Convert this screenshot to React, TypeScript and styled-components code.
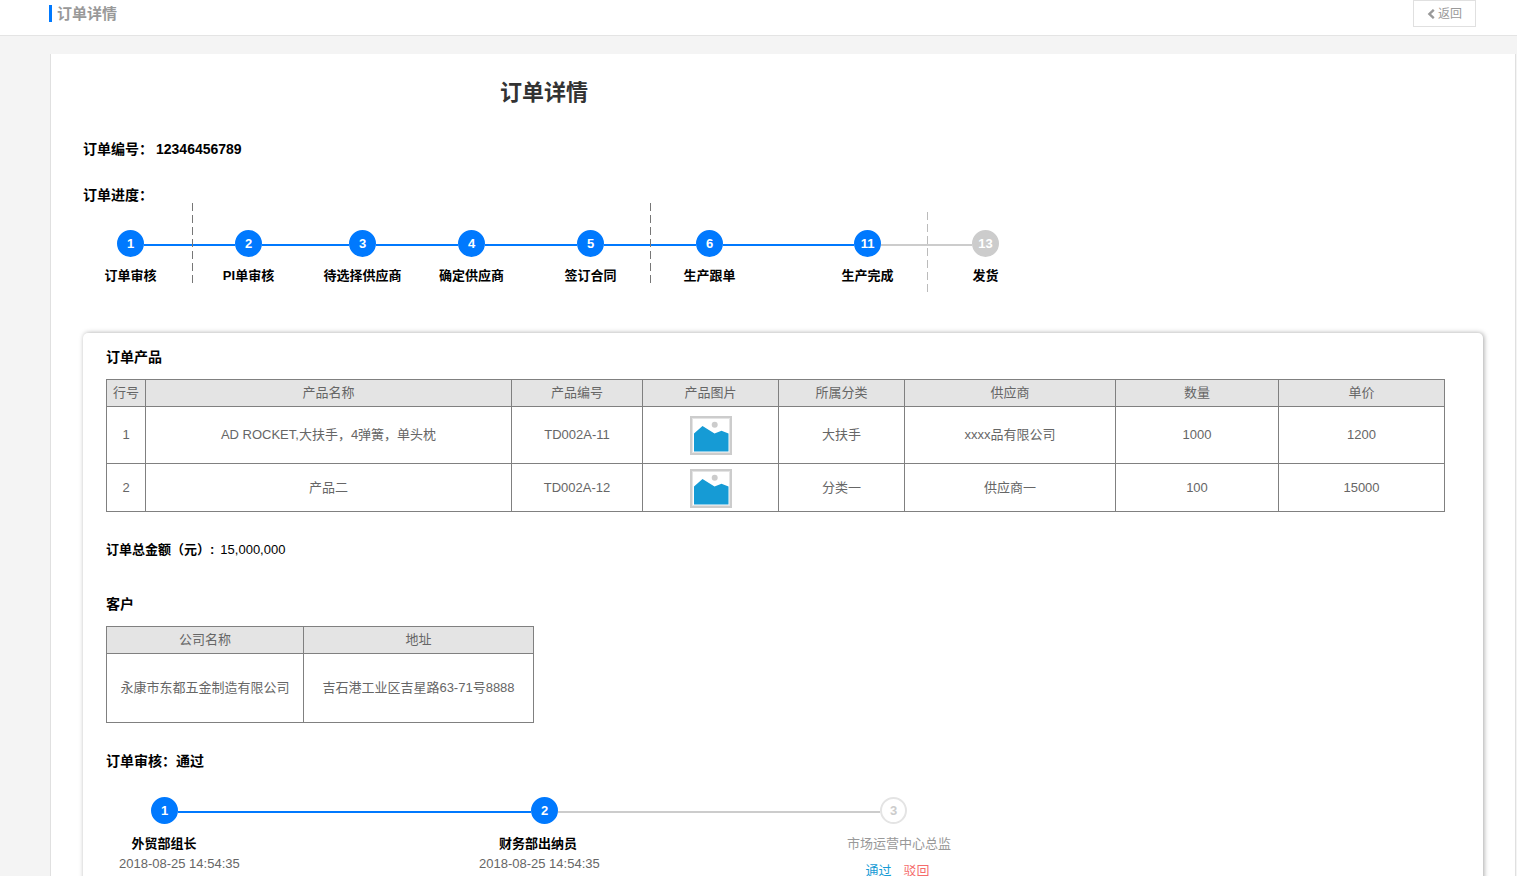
import React from "react";
import styled, { createGlobalStyle } from "styled-components";

const blue = "#0079fe";

const GlobalStyle = createGlobalStyle`
  *, *::before, *::after { box-sizing: border-box; }
  body {
    margin: 0;
    background: #f4f4f4;
    color: #666;
    font: 13px/20px "Liberation Sans", "Noto Sans CJK SC", sans-serif;
  }
  h1, h2, p { margin: 0; }
`;

const Page = styled.div`
  height: 100vh;
  overflow: hidden;
`;

const TopBar = styled.header`
  display: flex;
  align-items: flex-start;
  justify-content: space-between;
  height: 36px;
  padding: 0 41px 0 49px;
  background: #fff;
  border-bottom: 1px solid #e4e4e4;
`;

const Crumb = styled.div`
  margin-top: 5px;
  padding-left: 5px;
  border-left: 3px solid ${blue};
  color: #999;
  font-size: 15px;
  font-weight: 700;
  line-height: 17px;
`;

const BackButton = styled.button`
  display: flex;
  align-items: center;
  justify-content: center;
  gap: 3px;
  width: 63px;
  height: 27px;
  padding: 0;
  border: 1px solid #e0e0e0;
  background: #fff;
  color: #999;
  font: 12px/16px "Liberation Sans", "Noto Sans CJK SC", sans-serif;
`;

const Sheet = styled.main`
  margin: 18px 1px 0 50px;
  padding: 24px 32px 40px;
  background: #fff;
  border: solid #e0e0e0;
  border-width: 0 1px;
`;

const Overview = styled.section`
  max-width: 922px;
  height: 255px;
`;

const Title = styled.h1`
  color: #333;
  font-size: 22px;
  line-height: 30px;
  text-align: center;
`;

const Heading = styled.h2<{ $top?: number }>`
  display: flex;
  align-items: center;
  gap: 3px;
  margin-top: ${(p) => p.$top ?? 0}px;
  color: #000;
  font-size: 14px;
  font-weight: 700;
  line-height: 20px;
`;

const AmountLabel = styled.span`
  font-size: 13px;
`;

const Amount = styled.span`
  margin-left: 3px;
  font-size: 13px;
  font-weight: 400;
`;

const Track = styled.div<{ $top: number; $left: number }>`
  display: flex;
  margin: ${(p) => p.$top}px 0 0 ${(p) => p.$left}px;
`;

const Step = styled.div`
  display: flex;
  flex: none;
  flex-direction: column;
  align-items: center;
  gap: 9px;
  width: 27px;
`;

type NodeKind = "done" | "idle" | "hollow";

const Dot = styled.span<{ $kind: NodeKind }>`
  flex: none;
  width: 27px;
  height: 27px;
  border: 2px solid
    ${(p) => ({ done: blue, idle: "#ccc", hollow: "#e4e4e4" })[p.$kind]};
  border-radius: 50%;
  background: ${(p) => ({ done: blue, idle: "#ccc", hollow: "#fff" })[p.$kind]};
  color: ${(p) => (p.$kind === "hollow" ? "#ccc" : "#fff")};
  font-size: 13px;
  font-weight: 700;
  line-height: 23px;
  text-align: center;
`;

const StepLabel = styled.span`
  color: #000;
  font-weight: 700;
  white-space: nowrap;
`;

const Connector = styled.div<{ $width: number; $muted?: boolean }>`
  display: grid;
  flex: none;
  grid-template: 28px / 100%;
  align-items: center;
  width: ${(p) => p.$width}px;
  height: 28px;

  &::before {
    grid-area: 1 / 1;
    height: 2px;
    margin-top: 2px;
    background: ${(p) => (p.$muted ? "#ccc" : blue)};
    content: "";
  }
`;

const Divider = styled.i<{ $at: number; $muted?: boolean }>`
  grid-area: 1 / 1;
  width: 1px;
  height: 84px;
  margin: ${(p) => (p.$muted ? 20 : 2)}px 0 0 ${(p) => p.$at}px;
  background: repeating-linear-gradient(
    ${(p) => (p.$muted ? "#bbb" : "#777")} 0 8px,
    transparent 8px 12px
  );
`;

const Panel = styled.section`
  padding: 14px 38px 40px 23px;
  border-radius: 5px;
  background: #fff;
  box-shadow: 1px 0 5px rgba(0, 0, 0, 0.35);
`;

const Table = styled.table<{ $width?: string; $top: number }>`
  width: ${(p) => p.$width ?? "100%"};
  margin-top: ${(p) => p.$top}px;
  border-collapse: collapse;
  table-layout: fixed;
  text-align: center;

  th,
  td {
    padding: 0;
    border: 1px solid #808080;
    font-weight: 400;
  }

  th {
    height: 27px;
    background: #e4e4e4;
  }
`;

const Row = styled.tr<{ $height: number }>`
  height: ${(p) => p.$height}px;
`;

const Picture = styled.svg`
  display: block;
  margin: 1px auto 0;
`;

const Captions = styled.div`
  display: flex;
  margin: 9px 0 0 13px;
`;

const Caption = styled.div<{ $width: number }>`
  flex: none;
  width: ${(p) => p.$width}px;
  white-space: nowrap;
`;

const Person = styled.p<{ $width: number; $muted?: boolean }>`
  width: ${(p) => p.$width}px;
  color: ${(p) => (p.$muted ? "#999" : "#000")};
  font-weight: ${(p) => (p.$muted ? 400 : 700)};
  text-align: center;
`;

const Actions = styled.p`
  display: flex;
  justify-content: center;
  gap: 12px;
  width: 101px;
  margin-top: 7px;
`;

const Action = styled.a<{ $danger?: boolean }>`
  color: ${(p) => (p.$danger ? "#f56c6c" : "#169bd5")};
  text-decoration: none;
`;

type StepItem = {
  no: string;
  label: string;
  kind?: NodeKind;
  gap?: number;
  divider?: number;
  muted?: boolean;
};

const steps: StepItem[] = [
  { no: "1", label: "订单审核", gap: 91, divider: 48 },
  { no: "2", label: "PI单审核", gap: 87 },
  { no: "3", label: "待选择供应商", gap: 82 },
  { no: "4", label: "确定供应商", gap: 92 },
  { no: "5", label: "签订合同", gap: 92, divider: 46 },
  { no: "6", label: "生产跟单", gap: 131 },
  { no: "11", label: "生产完成", gap: 91, divider: 46, muted: true },
  { no: "13", label: "发货", kind: "idle" },
];

const productColumns: [string, number][] = [
  ["行号", 39],
  ["产品名称", 366],
  ["产品编号", 131],
  ["产品图片", 136],
  ["所属分类", 126],
  ["供应商", 211],
  ["数量", 163],
  ["单价", 166],
];

const products = [
  { name: "AD ROCKET,大扶手，4弹簧，单头枕", code: "TD002A-11", type: "大扶手", supplier: "xxxx品有限公司", count: "1000", price: "1200", height: 57 },
  { name: "产品二", code: "TD002A-12", type: "分类一", supplier: "供应商一", count: "100", price: "15000", height: 48 },
];

const Thumbnail = () => (
  <Picture width="42" height="39" viewBox="0 0 42 39" role="img" aria-label="产品图片">
    <rect x="1" y="1" width="40" height="37" fill="#fff" stroke="#ccc" strokeWidth="2" />
    <rect x="2.5" y="2.5" width="37" height="34" fill="none" stroke="#e4e4e4" />
    <circle cx="24.7" cy="8.8" r="3" fill="#ccc" />
    <path d="M4 17.5 12.5 10 24.5 17.5 31.5 14.8 38.5 17.5V35.5H4z" fill="#169bd5" />
  </Picture>
);

export default function App() {
  return (
    <Page>
      <GlobalStyle />
      <TopBar>
        <Crumb>订单详情</Crumb>
        <BackButton type="button">
          <svg width="8" height="10" viewBox="0 0 8 10" aria-hidden="true">
            <path d="M6.8 0.8 2.4 5l4.4 4.2" fill="none" stroke="#999" strokeWidth="2.4" />
          </svg>
          返回
        </BackButton>
      </TopBar>

      <Sheet>
        <Overview>
          <Title>订单详情</Title>
          <Heading $top={31}>
            订单编号：<span>12346456789</span>
          </Heading>
          <Heading $top={26}>订单进度：</Heading>
          <Track $top={25} $left={34}>
            {steps.map((s) => (
              <React.Fragment key={s.no}>
                <Step>
                  <Dot $kind={s.kind ?? "done"}>{s.no}</Dot>
                  <StepLabel>{s.label}</StepLabel>
                </Step>
                {s.gap && (
                  <Connector $width={s.gap} $muted={s.muted}>
                    {s.divider && <Divider $at={s.divider} $muted={s.muted} />}
                  </Connector>
                )}
              </React.Fragment>
            ))}
          </Track>
        </Overview>

        <Panel>
          <Heading>订单产品</Heading>
          <Table $top={12}>
            <colgroup>
              {productColumns.map(([name, width]) => (
                <col key={name} width={width} />
              ))}
            </colgroup>
            <thead>
              <tr>
                {productColumns.map(([name]) => (
                  <th key={name} scope="col">{name}</th>
                ))}
              </tr>
            </thead>
            <tbody>
              {products.map((p, i) => (
                <Row key={p.code} $height={p.height}>
                  <td>{i + 1}</td>
                  <td>{p.name}</td>
                  <td>{p.code}</td>
                  <td><Thumbnail /></td>
                  <td>{p.type}</td>
                  <td>{p.supplier}</td>
                  <td>{p.count}</td>
                  <td>{p.price}</td>
                </Row>
              ))}
            </tbody>
          </Table>

          <Heading as="p" $top={28}>
            <AmountLabel>订单总金额（元）:</AmountLabel>
            <Amount>15,000,000</Amount>
          </Heading>

          <Heading $top={34}>客户</Heading>
          <Table $width="428px" $top={12}>
            <colgroup>
              <col width={197} />
              <col width={230} />
            </colgroup>
            <thead>
              <tr>
                <th scope="col">公司名称</th>
                <th scope="col">地址</th>
              </tr>
            </thead>
            <tbody>
              <Row $height={69}>
                <td>永康市东都五金制造有限公司</td>
                <td>吉石港工业区吉星路63-71号8888</td>
              </Row>
            </tbody>
          </Table>

          <Heading $top={28}>订单审核：通过</Heading>
          <Track $top={26} $left={45}>
            <Dot $kind="done">1</Dot>
            <Connector $width={353} />
            <Dot $kind="done">2</Dot>
            <Connector $width={322} $muted />
            <Dot $kind="hollow">3</Dot>
          </Track>
          <Captions>
            <Caption $width={360}>
              <Person $width={90}>外贸部组长</Person>
              <time>2018-08-25 14:54:35</time>
            </Caption>
            <Caption $width={368}>
              <Person $width={118}>财务部出纳员</Person>
              <time>2018-08-25 14:54:35</time>
            </Caption>
            <Caption $width={101}>
              <Person $width={101} $muted>市场运营中心总监</Person>
              <Actions>
                <Action href="#approve">通过</Action>
                <Action href="#reject" $danger>驳回</Action>
              </Actions>
            </Caption>
          </Captions>
        </Panel>
      </Sheet>
    </Page>
  );
}
